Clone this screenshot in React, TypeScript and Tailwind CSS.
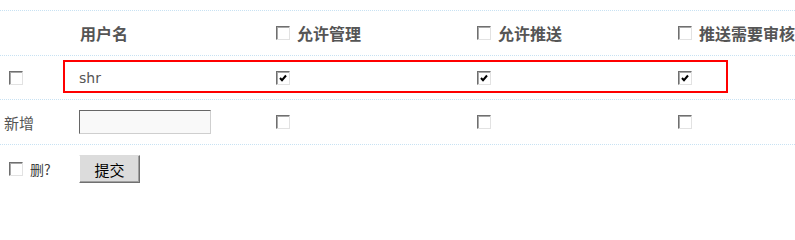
import React from "react";

function Box({ checked = false, first = false }: { checked?: boolean; first?: boolean }) {
  return (
    <span
      className={`${first ? "ml-[9px]" : "ml-[4px]"} mr-[3px] inline-flex h-[14px] w-[14px] shrink-0 items-center justify-center border border-t-[#6f6f6f] border-l-[#6f6f6f] border-r-[#e2e2e2] border-b-[#e2e2e2] bg-white shadow-[inset_1px_1px_0_#a8a8a8]`}
    >
      {checked && (
        <svg width="10" height="10" viewBox="0 0 10 10">
          <path d="M2 5 L4 7.2 L8 2.5" fill="none" stroke="#000" strokeWidth="2" />
        </svg>
      )}
    </span>
  );
}

const cjk = "font-['Noto_Sans_CJK_SC',sans-serif]";

export default function App() {
  const rowCls =
    "grid grid-cols-[75px_197px_201px_201px_1fr] items-center border-b border-dotted border-[#c8e2f3]";
  return (
    <div className={`relative w-[795px] h-[200px] overflow-hidden bg-white text-neutral-700 ${cjk}`}>
      <div className="mt-[10px] border-t border-dotted border-[#c8e2f3]">
        <div className={`${rowCls} h-[45px] text-[16px] font-bold text-[#555] leading-none`}>
          <div />
          <div className="pl-[5px]">用户名</div>
          <div className="flex items-center">
            <Box />
            <span className="ml-[4px] whitespace-nowrap">允许管理</span>
          </div>
          <div className="flex items-center">
            <Box />
            <span className="ml-[4px] whitespace-nowrap">允许推送</span>
          </div>
          <div className="flex items-center">
            <Box />
            <span className="ml-[4px] whitespace-nowrap">推送需要审核</span>
          </div>
        </div>
        <div className={`${rowCls} h-[44px]`}>
          <div className="flex items-center">
            <Box first />
          </div>
          <div className="pl-[4px] pt-[2px] font-['DejaVu_Sans',sans-serif] text-[14px] text-[#555]">shr</div>
          <div className="flex items-center"><Box checked /></div>
          <div className="flex items-center"><Box checked /></div>
          <div className="flex items-center"><Box checked /></div>
        </div>
        <div className={`${rowCls} h-[45px]`}>
          <div className="pl-[4px] text-[15px] text-[#555] leading-none">新增</div>
          <div className="pl-[4px]">
            <div className="h-[24px] w-[132px] border border-t-[#666] border-l-[#666] border-r-[#cfcfcf] border-b-[#cfcfcf] bg-[#f9f9f9]" />
          </div>
          <div className="flex items-center"><Box /></div>
          <div className="flex items-center"><Box /></div>
          <div className="flex items-center"><Box /></div>
        </div>
        <div className="grid grid-cols-[75px_1fr] items-center pt-[10px]">
          <div className="flex items-center text-[14px] leading-none text-neutral-700">
            <Box first />
            <span className="ml-[4px] text-neutral-700">删</span>
            <span className="text-neutral-700">?</span>
          </div>
          <div className="pl-[4px]">
            <button className="flex h-[28px] w-[61px] items-center justify-center border border-t-[#dcdcdc] border-l-white border-r-[#707070] border-b-[#707070] bg-[#dcdcdc] text-[15px] text-black leading-none shadow-[inset_-1px_-1px_0_#a0a0a0]">
              提交
            </button>
          </div>
        </div>
      </div>
      <div className="pointer-events-none absolute left-[63px] top-[60px] h-[33px] w-[665px] border-2 border-[#f00]" />
    </div>
  );
}
